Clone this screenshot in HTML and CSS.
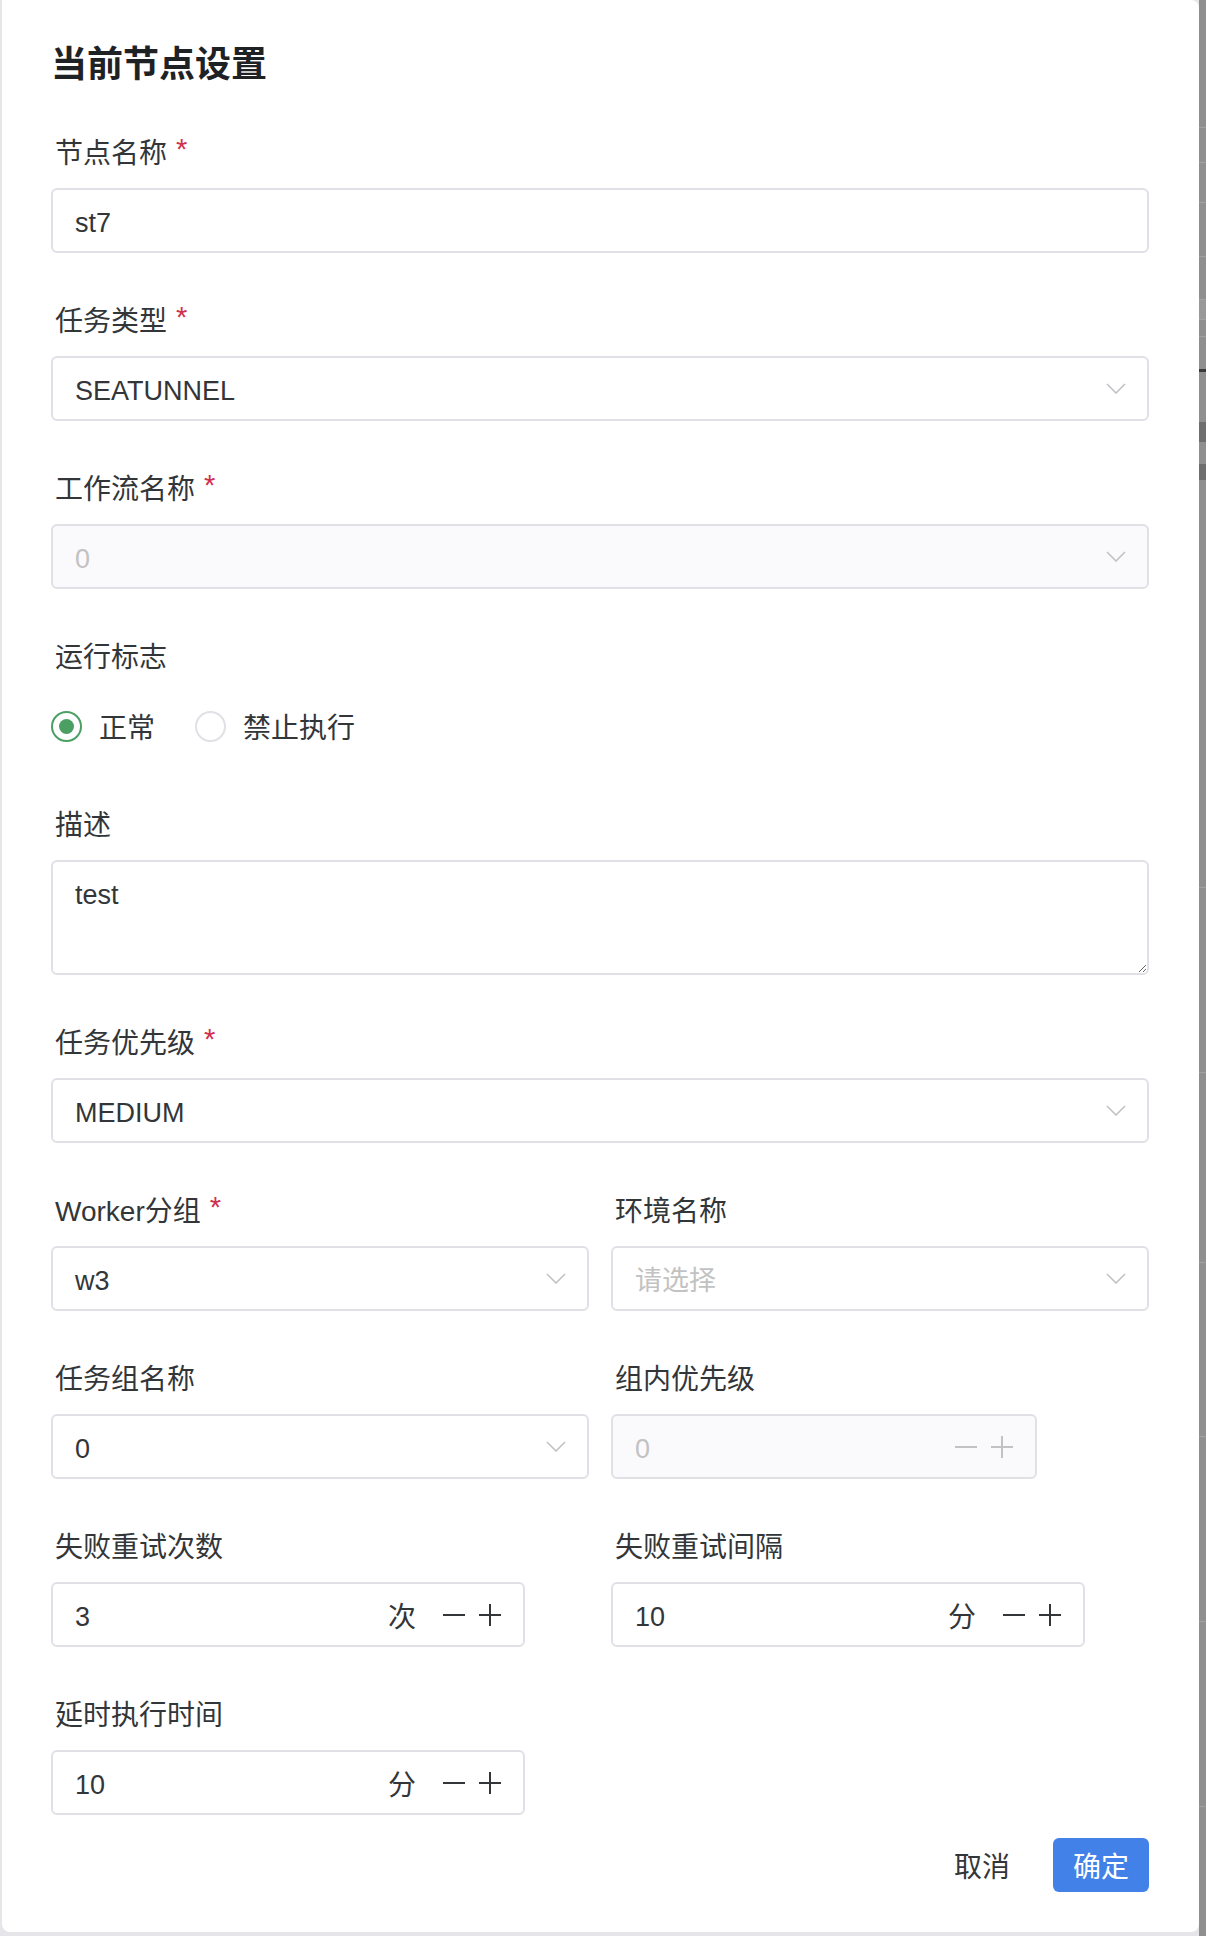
FILE: index.html
```html
<!DOCTYPE html>
<html lang="zh-CN">
<head>
    <meta charset="UTF-8">
    <meta name="viewport" content="width=device-width, initial-scale=1.0">
    <title>当前节点设置</title>
    <link rel="stylesheet" href="styles.css">
</head>
<body>
    <div class="drawer">
        <div class="drawer-body">
            <h2 class="drawer-title">当前节点设置</h2>

            <div class="form">
                <div class="form-item">
                    <div class="form-label">节点名称<span class="required">*</span></div>
                    <div class="control">
                        <span class="value">st7</span>
                    </div>
                </div>

                <div class="form-item">
                    <div class="form-label">任务类型<span class="required">*</span></div>
                    <div class="control select">
                        <span class="value">SEATUNNEL</span>
                        <span class="select-arrow">
                            <svg width="20" height="11" viewBox="0 0 20 11"><path d="M1 1l9 9 9-9" fill="none" stroke="currentColor" stroke-width="1.6"/></svg>
                        </span>
                    </div>
                </div>

                <div class="form-item">
                    <div class="form-label">工作流名称<span class="required">*</span></div>
                    <div class="control select is-disabled">
                        <span class="value">0</span>
                        <span class="select-arrow">
                            <svg width="20" height="11" viewBox="0 0 20 11"><path d="M1 1l9 9 9-9" fill="none" stroke="currentColor" stroke-width="1.6"/></svg>
                        </span>
                    </div>
                </div>

                <div class="form-item radio-item">
                    <div class="form-label">运行标志</div>
                    <div class="radio-group">
                        <label class="radio"><span class="radio-dot checked"></span>正常</label>
                        <label class="radio"><span class="radio-dot"></span>禁止执行</label>
                    </div>
                </div>

                <div class="form-item">
                    <div class="form-label">描述</div>
                    <textarea class="textarea" readonly>test</textarea>
                </div>

                <div class="form-item">
                    <div class="form-label">任务优先级<span class="required">*</span></div>
                    <div class="control select">
                        <span class="value">MEDIUM</span>
                        <span class="select-arrow">
                            <svg width="20" height="11" viewBox="0 0 20 11"><path d="M1 1l9 9 9-9" fill="none" stroke="currentColor" stroke-width="1.6"/></svg>
                        </span>
                    </div>
                </div>

                <div class="form-row">
                    <div class="form-item">
                        <div class="form-label">Worker分组<span class="required">*</span></div>
                        <div class="control select">
                            <span class="value">w3</span>
                            <span class="select-arrow">
                                <svg width="20" height="11" viewBox="0 0 20 11"><path d="M1 1l9 9 9-9" fill="none" stroke="currentColor" stroke-width="1.6"/></svg>
                            </span>
                        </div>
                    </div>
                    <div class="form-item">
                        <div class="form-label">环境名称</div>
                        <div class="control select">
                            <span class="value placeholder">请选择</span>
                            <span class="select-arrow">
                                <svg width="20" height="11" viewBox="0 0 20 11"><path d="M1 1l9 9 9-9" fill="none" stroke="currentColor" stroke-width="1.6"/></svg>
                            </span>
                        </div>
                    </div>
                </div>

                <div class="form-row">
                    <div class="form-item">
                        <div class="form-label">任务组名称</div>
                        <div class="control select">
                            <span class="value">0</span>
                            <span class="select-arrow">
                                <svg width="20" height="11" viewBox="0 0 20 11"><path d="M1 1l9 9 9-9" fill="none" stroke="currentColor" stroke-width="1.6"/></svg>
                            </span>
                        </div>
                    </div>
                    <div class="form-item">
                        <div class="form-label">组内优先级</div>
                        <div class="control number-input narrow is-disabled">
                            <span class="value">0</span>
                            <span class="steps">
                                <svg width="24" height="24" viewBox="0 0 24 24"><path d="M1 12h22" stroke="currentColor" stroke-width="2"/></svg>
                                <svg width="24" height="24" viewBox="0 0 24 24"><path d="M1 12h22M12 1v22" stroke="currentColor" stroke-width="2"/></svg>
                            </span>
                        </div>
                    </div>
                </div>

                <div class="form-row">
                    <div class="form-item">
                        <div class="form-label">失败重试次数</div>
                        <div class="control number-input">
                            <span class="value">3</span>
                            <span class="suffix">次</span>
                            <span class="steps">
                                <svg width="24" height="24" viewBox="0 0 24 24"><path d="M1 12h22" stroke="currentColor" stroke-width="2"/></svg>
                                <svg width="24" height="24" viewBox="0 0 24 24"><path d="M1 12h22M12 1v22" stroke="currentColor" stroke-width="2"/></svg>
                            </span>
                        </div>
                    </div>
                    <div class="form-item">
                        <div class="form-label">失败重试间隔</div>
                        <div class="control number-input">
                            <span class="value">10</span>
                            <span class="suffix">分</span>
                            <span class="steps">
                                <svg width="24" height="24" viewBox="0 0 24 24"><path d="M1 12h22" stroke="currentColor" stroke-width="2"/></svg>
                                <svg width="24" height="24" viewBox="0 0 24 24"><path d="M1 12h22M12 1v22" stroke="currentColor" stroke-width="2"/></svg>
                            </span>
                        </div>
                    </div>
                </div>

                <div class="form-item">
                    <div class="form-label">延时执行时间</div>
                    <div class="control number-input">
                        <span class="value">10</span>
                        <span class="suffix">分</span>
                        <span class="steps">
                            <svg width="24" height="24" viewBox="0 0 24 24"><path d="M1 12h22" stroke="currentColor" stroke-width="2"/></svg>
                            <svg width="24" height="24" viewBox="0 0 24 24"><path d="M1 12h22M12 1v22" stroke="currentColor" stroke-width="2"/></svg>
                        </span>
                    </div>
                </div>
            </div>
        </div>

        <div class="drawer-footer">
            <button class="btn btn-text">取消</button>
            <button class="btn btn-primary">确定</button>
        </div>
    </div>

    <!-- page behind the drawer, dimmed by the mask -->
    <div class="mask-strip"></div>
</body>
</html>
```

FILE: styles.css
```css
body {
    margin: 0;
    height: 1936px;
    display: flex;
    overflow: hidden;
    background-color: #e6e6ea;
    font-family: "Liberation Sans", "Noto Sans CJK SC", sans-serif;
    color: #333639;
}

.drawer {
    margin-left: 2px;
    width: 1197px;
    height: 1932px;
    background-color: #fff;
    border-radius: 0 8px 8px 8px;
    display: flex;
    flex-direction: column;
}

.drawer-body {
    flex: 1;
    overflow: hidden;
    padding: 40px 50px 0 49px;
}

.drawer-title {
    margin: 0;
    font-size: 36px;
    line-height: 50px;
    font-weight: 700;
    color: #1f2225;
}

.form {
    margin-top: 42px;
}

.form-item {
    margin-bottom: 47px;
}

.form-label {
    height: 40px;
    line-height: 43px;
    padding-left: 4px;
    font-size: 28px;
    margin-bottom: 16px;
    white-space: nowrap;
    overflow: visible;
}

.required {
    color: #d03050;
    margin-left: 9px;
    font-size: 29px;
    vertical-align: 4px;
    line-height: 1;
}

.form-row {
    display: grid;
    grid-template-columns: 1fr 1fr;
    column-gap: 22px;
}

/* inputs, selects and number inputs share the same box */
.control {
    height: 65px;
    box-sizing: border-box;
    border: 2px solid #e0e0e6;
    border-radius: 6px;
    background-color: #fff;
    display: flex;
    align-items: center;
    padding: 0 21px 0 22px;
    font-size: 27px;
}

.control .value {
    flex: 1;
    padding-top: 5px;
}

.control .placeholder {
    color: #c2c2c2;
    padding-top: 0;
}

.select-arrow {
    display: flex;
    color: #c2c2c6;
}

.is-disabled {
    background-color: #fafafc;
    color: #c2c2c2;
}

.number-input {
    width: 474px;
}

.number-input.narrow {
    width: 426px;
}

.suffix {
    font-size: 28px;
    margin-right: 26px;
}

.steps {
    display: flex;
    gap: 12px;
}

.radio-item {
    margin-bottom: 44px;
}

.radio-group {
    height: 68px;
    display: flex;
    align-items: center;
    gap: 40px;
}

.radio {
    display: flex;
    align-items: center;
    gap: 17px;
    font-size: 28px;
}

.radio-dot {
    width: 31px;
    height: 31px;
    box-sizing: border-box;
    border: 2px solid #e0e0e6;
    border-radius: 50%;
    display: flex;
    align-items: center;
    justify-content: center;
}

.radio-dot.checked {
    border-color: #4b9f63;
}

.radio-dot.checked::after {
    content: "";
    width: 15px;
    height: 15px;
    border-radius: 50%;
    background-color: #4b9f63;
}

.textarea {
    display: block;
    width: 100%;
    height: 115px;
    box-sizing: border-box;
    border: 2px solid #e0e0e6;
    border-radius: 6px;
    padding: 14px 22px 12px;
    font-family: "Liberation Sans", "Noto Sans CJK SC", sans-serif;
    font-size: 27px;
    line-height: 38px;
    color: #333639;
    resize: vertical;
    outline: none;
}

.drawer-footer {
    display: flex;
    justify-content: flex-end;
    align-items: center;
    gap: 23px;
    padding: 0 50px 40px 0;
}

.btn {
    height: 54px;
    padding: 0 20px;
    border: none;
    border-radius: 6px;
    background: none;
    font-family: inherit;
    font-size: 28px;
    color: #333639;
    cursor: pointer;
}

.btn-primary {
    background-color: #4281e8;
    color: #fff;
}

.mask-strip {
    width: 7px;
    height: 1936px;
    background: linear-gradient(to bottom,
        #8f8f8f 0 127px, #a2a2a2 127px 128px,
        #8f8f8f 128px 162px, #a2a2a2 162px 163px,
        #8f8f8f 163px 202px, #a2a2a2 202px 203px,
        #8f8f8f 203px 256px, #a2a2a2 256px 257px,
        #8f8f8f 257px 299px, #a2a2a2 299px 300px,
        #989898 300px 319px, #a2a2a2 319px 320px,
        #8f8f8f 320px 336px, #a2a2a2 336px 337px,
        #8f8f8f 337px 369px, #3a3a3a 369px 372px,
        #8f8f8f 372px 422px, #6e6e6e 422px 442px,
        #8f8f8f 442px 464px, #6e6e6e 464px 480px,
        #8f8f8f 480px 887px, #a2a2a2 887px 888px,
        #8f8f8f 888px 1072px, #a2a2a2 1072px 1073px,
        #8f8f8f 1073px 1262px, #a2a2a2 1262px 1263px,
        #8f8f8f 1263px 1436px, #a2a2a2 1436px 1437px,
        #8f8f8f 1437px 1621px, #a2a2a2 1621px 1622px,
        #8f8f8f 1622px 1806px, #a2a2a2 1806px 1807px,
        #8f8f8f 1807px);
}
```
